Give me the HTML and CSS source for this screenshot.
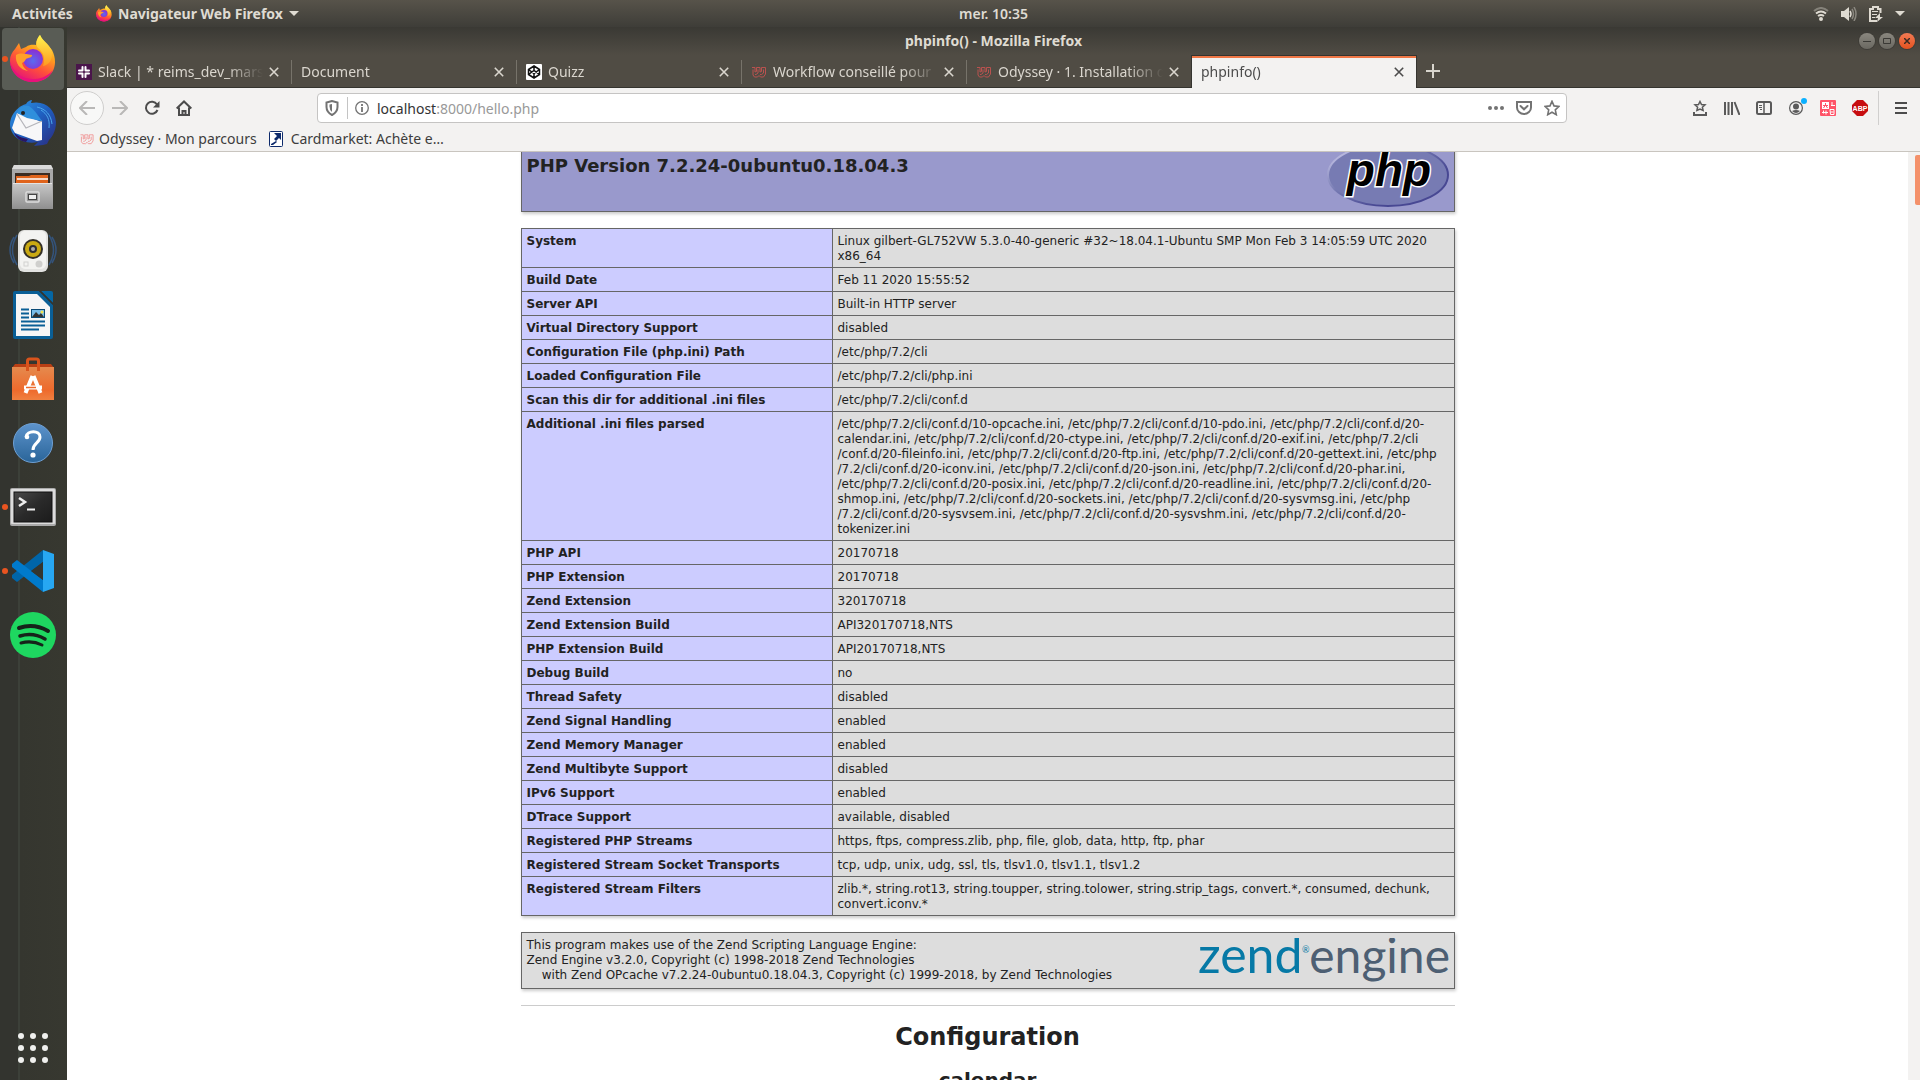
FILE: index.html
```html
<!DOCTYPE html>
<html lang="fr">
<head>
<meta charset="utf-8">
<title>phpinfo()</title>
<link rel="stylesheet" href="styles.css">
</head>
<body>
<svg class="defs" aria-hidden="true">
  <defs>
    <linearGradient id="fox-body" x1="0.8" y1="0" x2="0.3" y2="1"><stop offset="0" stop-color="#fff44f"/><stop offset=".35" stop-color="#ffa21c"/><stop offset=".65" stop-color="#ff4f3b"/><stop offset="1" stop-color="#e3107c"/></linearGradient>
    <radialGradient id="fox-globe" cx=".5" cy=".6" r=".6"><stop offset="0" stop-color="#5a6bf0"/><stop offset="1" stop-color="#8e2bd0"/></radialGradient>
    <linearGradient id="fox-flame" x1="0" y1="0" x2="0" y2="1"><stop offset="0" stop-color="#fff44f"/><stop offset="1" stop-color="#ff9a20"/></linearGradient>
    <linearGradient id="bird" x1="0" y1="0" x2="1" y2="1"><stop offset="0" stop-color="#2f9be8"/><stop offset=".5" stop-color="#1f5fc0"/><stop offset="1" stop-color="#2b2a7c"/></linearGradient>
    <linearGradient id="metal" x1="0" y1="0" x2="0" y2="1"><stop offset="0" stop-color="#c8c8c8"/><stop offset="1" stop-color="#8f8f8f"/></linearGradient>
    <linearGradient id="bag" x1="0" y1="0" x2="0" y2="1"><stop offset="0" stop-color="#e58a4e"/><stop offset=".7" stop-color="#ee6a2c"/><stop offset="1" stop-color="#f08040"/></linearGradient>
    <linearGradient id="help" x1="0" y1="0" x2="0" y2="1"><stop offset="0" stop-color="#5d93cc"/><stop offset="1" stop-color="#2a6599"/></linearGradient>
    <linearGradient id="screen" x1="0" y1="0" x2="1" y2="1"><stop offset="0" stop-color="#4a4a4a"/><stop offset=".5" stop-color="#2a2a2a"/><stop offset="1" stop-color="#1b1b1b"/></linearGradient>
    <symbol id="i-firefox" viewBox="0 0 46 48">
      <path d="M5 14 9 8l2 6 5-2c4-3 8-2 10-2 0-5 2-8 4-10 2 6 8 9 12 15 2 4 3 8 3 12C45 39 35 47 23 47S0 38 0 25c0-4 2-8 5-11z" fill="url(#fox-body)"/>
      <path d="M30 0c-3 4-5 9-2 13 5 4 8 10 5 18 6-1 9-6 9-12 0-9-9-12-12-19z" fill="url(#fox-flame)"/>
      <circle cx="23" cy="24" r="10" fill="url(#fox-globe)"/>
      <path d="M6 20c5-3 9-1 16 0 1 2-4 3-6 4-1 2-2 3-4 4 1 4 3 6 6 8-8-1-13-8-12-16z" fill="#ffa02a"/>
      <path d="M0 27c1 12 11 20 23 20 10 0 17-5 20-12-7 8-14 9-20 9C12 44 4 38 0 27z" fill="#e8117c"/>
    </symbol>
    <symbol id="i-odyssey" viewBox="0 0 15 12"><g fill="none" stroke="currentColor"><path d="M.5 1.500h3V6l1.500-.5V1.500h3.500V6l1.500-.5V1.500H14V8l-2 3H9L7.500 9.500 6 11H3L1.500 9V3.500"/><path d="M3.500 8.500h1l2-1.500V3.500M8.500 8.500h1.500L12 7V3.500"/></g></symbol>
    <symbol id="i-close" viewBox="0 0 10 10"><path d="M.8.800l8.400 8.400M9.200.8.800 9.200" stroke="currentColor" stroke-width="1.600"/></symbol>
  </defs>
</svg>

<header class="topbar">
  <button class="top-item activities">Activités</button>
  <button class="top-item appmenu">
    <svg width="16" height="17"><use href="#i-firefox"/></svg>
    <span>Navigateur Web Firefox</span>
    <svg width="10" height="5"><path d="M0 0h10L5 5z" fill="currentColor"/></svg>
  </button>
  <button class="top-item clock">mer. 10:35</button>
  <div class="status">
    <svg width="16" height="14" viewBox="0 0 16 14" fill="none" stroke="#dfdbd2" stroke-width="2"><path d="M1 4Q8-2 15 4" stroke="#85827a"/><path d="M3 6.500q5-4 10 0"/><path d="M5 9q3-2 6 0"/><circle cx="8" cy="12" r="1" /></svg>
    <svg width="16" height="14" viewBox="0 0 16 14"><path d="M0 4h3l5-4v14l-5-4H0z" fill="#dfdbd2"/><path d="M9 4q2 3 0 6" stroke="#dfdbd2" stroke-width="1.500" fill="none"/><path d="M11 2q3 5 0 10M13 0q4 7 0 14" stroke="#8a877f" stroke-width="1.500" fill="none"/></svg>
    <svg width="14" height="16" viewBox="0 0 14 16"><path d="M8 15H1V3h3V1h5v2h2.500v4" stroke="#dfdbd2" stroke-width="2" fill="none"/><path d="M3 5.500h6M3 8.500h5M3 11.500h3" stroke="#dfdbd2"/><path d="M11 7l-5 5h3l-1 4 6-5h-3z" fill="#dfdbd2"/></svg>
    <svg width="10" height="5"><path d="M0 0h10L5 5z" fill="#dfdbd2"/></svg>
  </div>
</header>

<nav class="dock" aria-label="Applications">
  <button class="app active running" aria-label="Firefox"><svg width="46" height="48"><use href="#i-firefox"/></svg></button>
  <button class="app" aria-label="Thunderbird"><svg width="48" height="48" viewBox="0 0 48 48">
    <path d="M3 17C7 10 11 7 17 5c2-3 4-4 6-4l-1 3c14-3 24 6 25 19 0 8-3 14-7 18l-2 4-4 1-9 1 4-4C14 46 1 38 1 25c0-3 1-6 2-8z" fill="url(#bird)"/>
    <path d="M5 33c3 4 8 6 14 7l-2 3c-6-1-11-5-12-10z" fill="#2a1663"/>
    <path d="M8 14l25 9v18l-5 1-22-8-3-5z" fill="#f7f7f8"/><path d="M8 15l9 14 16-7" fill="none" stroke="#b5b5ba" stroke-width="1.200"/>
    <path d="M8 14C10 8 14 6 20 7c5 3 8 8 13 15L18 19z" fill="#2f8fdc"/><circle cx="14" cy="14" r="2" fill="#222"/>
    <path d="M32 11c6 4 9 9 8 18M28 8c9 2 14 8 15 17" stroke="#4ba7ec" fill="none"/></svg></button>
  <button class="app" aria-label="Fichiers"><svg width="44" height="46" viewBox="0 0 44 46">
    <path d="M3 1h37l2 4v39H1V5z" fill="#a9a9a9"/><path d="M3 1h37l2 4H1z" fill="#dadada"/><path d="M4 9h35v11H4z" fill="#3b2c22"/>
    <path d="M5 12h13l2-1h17v8H5z" fill="#e0641c"/><path d="M6 15h31" stroke="#fff" stroke-width="1.500"/>
    <path d="M2 19h39l1 26H1z" fill="url(#metal)"/><path d="M2 19.500h39" stroke="#e4e4e4"/>
    <rect x="15" y="28" width="13" height="10" rx="1" fill="#999" stroke="#ddd" stroke-width="1.500"/><rect x="17.500" y="30.500" width="8" height="5" fill="#eee" stroke="#444"/></svg></button>
  <button class="app" aria-label="Rhythmbox"><svg width="48" height="44" viewBox="0 0 48 44">
    <path d="M5 8q-8 13 0 26M8 6Q-1 21 8 36M43 8q8 13 0 26M40 6q9 15 0 30" fill="none" stroke="#34537a" stroke-width="1.500"/>
    <rect x="9" y="1" width="30" height="42" rx="6" fill="#e2e2e0"/><rect x="11" y="2" width="26" height="38" rx="5" fill="#f3f3f1"/>
    <circle cx="24" cy="20" r="10" fill="#332f27"/><circle cx="24" cy="20" r="8" fill="#c9a913"/><circle cx="24" cy="20" r="4" fill="#2d2d33"/><circle cx="24" cy="20" r="2" fill="#aaa"/>
    <circle cx="30" cy="35" r="3.500" fill="#cfcfcd"/><rect x="15" y="33" width="4" height="4" fill="none" stroke="#d2d2d0"/></svg></button>
  <button class="app" aria-label="LibreOffice Writer"><svg width="40" height="48" viewBox="0 0 40 48">
    <path d="M2 0h24l14 14v32q0 2-2 2H2q-2 0-2-2V2Q0 0 2 0z" fill="#0a5f96"/><path d="M28 0h10q2 0 2 2v10z" fill="#0567a5"/>
    <path d="M26 0h2l12 12v2z" fill="#33332e"/><path d="M3 3h21l13 13v29H3z" fill="#f6f6f6"/>
    <path d="M8 18.500h8M8 22.500h8M8 26.500h8M8 30.500h24M8 34.500h24M8 38.500h18" stroke="#0a5f96" stroke-width="2"/>
    <rect x="18.500" y="18.500" width="13" height="8" fill="#79bce8" stroke="#0a4a76"/><path d="M19 26l4-5 3 3 2-2 3 4z" fill="#333"/><circle cx="29" cy="21" r="1.500" fill="#f4e24a"/></svg></button>
  <button class="app" aria-label="Logiciels"><svg width="42" height="44" viewBox="0 0 42 44">
    <path d="M3 7h36l3 4v32H0V11z" fill="#b93f14"/><path d="M0 10h42v33H0z" fill="url(#bag)"/>
    <path d="M15.500 14V4q0-2 2-2h7q2 0 2 2v10" fill="none" stroke="#d9541c" stroke-width="3"/>
    <path d="M20.500 19l-7 17M21.500 19l7 17" stroke="#fff" stroke-width="4"/><path d="M12 30.500h18" stroke="#fff" stroke-width="4" /><path d="M14 30.500h10" stroke="#ee6a2c" stroke-width="1.500"/></svg></button>
  <button class="app" aria-label="Aide"><svg width="40" height="40" viewBox="0 0 40 40"><circle cx="20" cy="20" r="19.500" fill="url(#help)" stroke="#6fa0d4"/><path d="M13 14c1-7 14-7 14 0 0 6-7 6-7 13" fill="none" stroke="#fff" stroke-width="3"/><circle cx="14" cy="14" r="2.300" fill="#fff"/><circle cx="20" cy="32" r="2.600" fill="#fff"/></svg></button>
  <button class="app running" aria-label="Terminal"><svg width="46" height="38" viewBox="0 0 46 38"><rect width="46" height="38" rx="2" fill="#aaa"/><rect x="1" y="1" width="44" height="35" rx="1" fill="#dcdcdc"/><rect x="4" y="4" width="38" height="30" fill="url(#screen)" stroke="#111"/><path d="M9 10l6 4-6 4" fill="none" stroke="#eee" stroke-width="2.500"/><path d="M17 21.500h8" stroke="#eee" stroke-width="2"/></svg></button>
  <button class="app running" aria-label="Visual Studio Code"><svg width="42" height="42" viewBox="0 0 42 42"><path d="M31 0v12L5 32l-5-4v-3z" fill="#0065a9"/><path d="M31 42V30L5 10l-5 4v3z" fill="#007acc"/><path d="M31 0l11 4v34l-11 4z" fill="#27a7f2"/><path d="M31 12v18L19 21z" fill="#34352f"/></svg></button>
  <button class="app" aria-label="Spotify"><svg width="46" height="46" viewBox="0 0 46 46"><circle cx="23" cy="23" r="23" fill="#1ed760"/><g fill="none" stroke="#16231a" stroke-linecap="round"><path d="M9 16q15-5 29 3" stroke-width="4"/><path d="M10 24q13-4 25 3" stroke-width="3.500"/><path d="M11 31q11-3 21 2" stroke-width="3"/></g></svg></button>
  <button class="app show-apps" aria-label="Afficher les applications"><svg width="30" height="30" viewBox="0 0 30 30" fill="#f0f0ee"><circle cx="3" cy="3" r="3"/><circle cx="15" cy="3" r="3"/><circle cx="27" cy="3" r="3"/><circle cx="3" cy="15" r="3"/><circle cx="15" cy="15" r="3"/><circle cx="27" cy="15" r="3"/><circle cx="3" cy="27" r="3"/><circle cx="15" cy="27" r="3"/><circle cx="27" cy="27" r="3"/></svg></button>
</nav>

<main class="window">
  <div class="titlebar">
    <span></span>
    <span class="title">phpinfo() - Mozilla Firefox</span>
    <div class="controls">
      <button class="control" aria-label="Réduire"><svg width="8" height="8"><path d="M0 4.500h8" stroke="#3a3935"/></svg></button>
      <button class="control" aria-label="Agrandir"><svg width="8" height="8"><path d="M.5 1.500h7v5h-7z" stroke="#3a3935" fill="none"/></svg></button>
      <button class="control quit" aria-label="Fermer"><svg width="6" height="6"><path d="M0 0l6 6M6 0 0 6" stroke="#3a2a22" stroke-width="1.500"/></svg></button>
    </div>
  </div>

  <div class="tabs">
    <div class="tab">
      <svg width="16" height="16"><rect width="16" height="16" fill="#4a154b"/><g stroke="#fff" stroke-width="2" stroke-linecap="round"><path d="M6.500 3v3.500M3 6.500h3.500M9.500 3v3.500M9.500 6.500H13M3 9.500h3.500M6.500 9.500V13M9.500 9.500H13M9.500 9.500V13"/></g></svg>
      <a class="tab-label" href="#">Slack | * reims_dev_mars2</a>
      <button class="tab-close" aria-label="Fermer l’onglet"><svg width="10" height="10"><use href="#i-close"/></svg></button>
    </div>
    <div class="tab">
      <a class="tab-label" href="#">Document</a>
      <button class="tab-close" aria-label="Fermer l’onglet"><svg width="10" height="10"><use href="#i-close"/></svg></button>
    </div>
    <div class="tab">
      <svg width="16" height="16"><rect width="16" height="16" rx="1" fill="#fff"/><path d="M8 2l5.500 3.500v5L8 14l-5.500-3.500v-5zM8 2v4M8 10v4M2.500 5.500 8 9.500l5.500-4M2.500 10.500 8 6.500l5.500 4" fill="none" stroke="#111" stroke-width="1.500"/></svg>
      <a class="tab-label" href="#">Quizz</a>
      <button class="tab-close" aria-label="Fermer l’onglet"><svg width="10" height="10"><use href="#i-close"/></svg></button>
    </div>
    <div class="tab">
      <svg class="ody-dark" width="16" height="12"><use href="#i-odyssey"/></svg>
      <a class="tab-label" href="#">Workflow conseillé pour</a>
      <button class="tab-close" aria-label="Fermer l’onglet"><svg width="10" height="10"><use href="#i-close"/></svg></button>
    </div>
    <div class="tab">
      <svg class="ody-dark" width="16" height="12"><use href="#i-odyssey"/></svg>
      <a class="tab-label" href="#">Odyssey · 1. Installation d</a>
      <button class="tab-close" aria-label="Fermer l’onglet"><svg width="10" height="10"><use href="#i-close"/></svg></button>
    </div>
    <div class="tab current">
      <a class="tab-label" href="#">phpinfo()</a>
      <button class="tab-close" aria-label="Fermer l’onglet"><svg width="10" height="10"><use href="#i-close"/></svg></button>
    </div>
    <button class="newtab" aria-label="Nouvel onglet"><svg width="14" height="14"><path d="M7 0v14M0 7h14" stroke="#d8d5cd" stroke-width="2"/></svg></button>
  </div>

  <div class="toolbar">
    <div class="nav-left">
      <button class="tool back" aria-label="Précédent"><svg width="16" height="14" fill="none" stroke="#b9b8b7" stroke-width="2"><path d="M16 7H1M8 0 1 7l7 7"/></svg></button>
      <button class="tool" aria-label="Suivant"><svg width="16" height="14" fill="none" stroke="#b9b8b7" stroke-width="2"><path d="M0 7h15M8 0l7 7-7 7"/></svg></button>
      <button class="tool" aria-label="Actualiser"><svg width="16" height="16"><path d="M13 4.500A6 6 0 1 0 13.500 10" fill="none" stroke="#4c4c4c" stroke-width="2"/><path d="M15.500 1v6.500H9z" fill="#4c4c4c"/></svg></button>
      <button class="tool" aria-label="Accueil"><svg width="16" height="16" fill="none" stroke="#4c4c4c" stroke-width="2"><path d="M.7 8.500 8 1.500l7.300 7M3 7.500V15h10V7.500"/><path d="M6.500 15v-4h3v4" /></svg></button>
    </div>
    <div class="urlbar">
      <svg width="14" height="16" fill="none" stroke="#737373" stroke-width="2"><path d="M7 1 1.500 2.500V7q0 5 5.500 8 5.500-3 5.500-8V2.500z"/><path d="M7 4v8Q4.500 10 4.500 6.500v-2z" fill="#737373" stroke="none"/></svg>
      <span class="url-sep"></span>
      <svg width="14" height="14"><circle cx="7" cy="7" r="6.300" fill="none" stroke="#737373" stroke-width="1.300"/><path d="M7 6v5M7 3v2" stroke="#737373" stroke-width="1.800"/></svg>
      <label class="url-text"><span class="url-show"><b>localhost</b>:8000/hello.php</span><input class="url-input" type="text" aria-label="Adresse"></label>
      <svg width="16" height="4" fill="#737373"><circle cx="2" cy="2" r="2"/><circle cx="8" cy="2" r="2"/><circle cx="14" cy="2" r="2"/></svg>
      <svg width="16" height="14" fill="none" stroke="#737373" stroke-width="2"><path d="M1 1h14v5.500a7 6.500 0 0 1-14 0z"/><path d="M4.500 5 8 8.300 11.500 5" stroke-linecap="round"/></svg>
      <svg width="16" height="16" fill="none" stroke="#737373" stroke-width="1.600"><path d="M8 1.300l2 4.600 5 .5-3.700 3.400 1 4.900L8 12.200l-4.300 2.500 1-4.900L1 6.400l5-.5z"/></svg>
    </div>
    <div class="nav-right">
      <button class="tool" aria-label="Marque-pages"><svg width="14" height="16" fill="none" stroke="#5a5a5a"><path d="M7 1.500l1.500 3 3.500.4-2.600 2.300.7 3.300L7 9l-3.100 1.500.7-3.300L2 4.900l3.500-.4z" stroke-width="1.500"/><path d="M1 12v3h12v-3" stroke-width="2"/></svg></button>
      <button class="tool" aria-label="Bibliothèque"><svg width="16" height="14" stroke="#5a5a5a" stroke-width="2"><path d="M1 1v13M4.500 1v13M8 1v13M10.500 1l5 13"/></svg></button>
      <button class="tool" aria-label="Panneau latéral"><svg width="16" height="14" fill="none" stroke="#5a5a5a"><rect x="1" y="1" width="14" height="12" rx="1.500" stroke-width="2"/><path d="M8 1v12" stroke-width="1.500"/><path d="M3 4.500h3M3 6.500h3M4 8.500h2"/></svg></button>
      <button class="tool account" aria-label="Compte"><svg width="14" height="14"><circle cx="7" cy="7" r="6.400" fill="none" stroke="#5a5a5a" stroke-width="1.200"/><circle cx="7" cy="5.500" r="3" fill="#5a5a5a"/><path d="M3 10q4-2 8 0-4 4-8 0z" fill="#5a5a5a"/></svg><span class="dot"></span></button>
      <button class="tool" aria-label="Traduction"><svg width="16" height="16"><rect width="16" height="16" rx="1" fill="#ff5468"/><path d="M2 2h7v7H2z" fill="#fff"/><path d="M5.500 3v2M3 5.500h5M5.500 5 3.500 8M5.500 5l2 3" stroke="#ff5468" fill="none"/><path d="M11 5.500h4M12 2v3M10 9.500h4v5h-3.500zM2 12.500h6M3.500 10.500v3M6 10.500v4M10.500 12h3" fill="none" stroke="#fff"/></svg></button>
      <button class="tool" aria-label="Adblock Plus"><svg width="16" height="16"><path d="M5 0h6l5 5v6l-5 5H5l-5-5V5z" fill="#c70d10"/><text class="abp" x="8" y="11" text-anchor="middle">ABP</text></svg></button>
      <span class="tool-sep"></span>
      <button class="tool menu" aria-label="Menu"><svg width="12" height="12" stroke="#4c4c4c" stroke-width="2"><path d="M0 1h12M0 6h12M0 11h12"/></svg></button>
    </div>
  </div>

  <div class="bookmarks">
    <a href="#"><svg class="ody-light" width="14" height="12"><use href="#i-odyssey"/></svg>Odyssey · Mon parcours</a>
    <a href="#" class="cm"><svg width="14" height="16"><rect x=".5" y=".5" width="13" height="15" rx="1" fill="#fff" stroke="#0d2a6b"/><path d="M5 2h7v7l-2-2-3 3-2-2 3-3z M2 13l5-3 1 1-4 3H2z" fill="#0d2a6b"/></svg>Cardmarket: Achète e…</a>
  </div>

  <div class="viewport">
    <article class="doc">
      <section class="box head">
        <h1>PHP Version 7.2.24-0ubuntu0.18.04.3</h1>
        <svg class="php-logo" width="122" height="66" viewBox="0 0 122 66" role="img" aria-label="PHP">
          <defs><linearGradient id="rim" x1="0" y1="0" x2="1" y2="1"><stop offset=".15" stop-color="#b5b5dc"/><stop offset=".4" stop-color="#777bb3"/><stop offset=".7" stop-color="#484893"/></linearGradient></defs>
          <ellipse cx="61" cy="34" rx="60" ry="31" fill="#777bb3" stroke="url(#rim)" stroke-width="2"/>
          <text class="php-word" x="62" y="45" text-anchor="middle">php</text>
        </svg>
      </section>

      <table class="info">
        <tr><th scope="row">System</th><td>Linux gilbert-GL752VW 5.3.0-40-generic #32~18.04.1-Ubuntu SMP Mon Feb 3 14:05:59 UTC 2020<br>x86_64</td></tr>
        <tr><th scope="row">Build Date</th><td>Feb 11 2020 15:55:52</td></tr>
        <tr><th scope="row">Server API</th><td>Built-in HTTP server</td></tr>
        <tr><th scope="row">Virtual Directory Support</th><td>disabled</td></tr>
        <tr><th scope="row">Configuration File (php.ini) Path</th><td>/etc/php/7.2/cli</td></tr>
        <tr><th scope="row">Loaded Configuration File</th><td>/etc/php/7.2/cli/php.ini</td></tr>
        <tr><th scope="row">Scan this dir for additional .ini files</th><td>/etc/php/7.2/cli/conf.d</td></tr>
        <tr><th scope="row">Additional .ini files parsed</th><td>/etc/php/7.2/cli/conf.d/10-opcache.ini, /etc/php/7.2/cli/conf.d/10-pdo.ini, /etc/php/7.2/cli/conf.d/20-<br>calendar.ini, /etc/php/7.2/cli/conf.d/20-ctype.ini, /etc/php/7.2/cli/conf.d/20-exif.ini, /etc/php/7.2/cli<br>/conf.d/20-fileinfo.ini, /etc/php/7.2/cli/conf.d/20-ftp.ini, /etc/php/7.2/cli/conf.d/20-gettext.ini, /etc/php<br>/7.2/cli/conf.d/20-iconv.ini, /etc/php/7.2/cli/conf.d/20-json.ini, /etc/php/7.2/cli/conf.d/20-phar.ini,<br>/etc/php/7.2/cli/conf.d/20-posix.ini, /etc/php/7.2/cli/conf.d/20-readline.ini, /etc/php/7.2/cli/conf.d/20-<br>shmop.ini, /etc/php/7.2/cli/conf.d/20-sockets.ini, /etc/php/7.2/cli/conf.d/20-sysvmsg.ini, /etc/php<br>/7.2/cli/conf.d/20-sysvsem.ini, /etc/php/7.2/cli/conf.d/20-sysvshm.ini, /etc/php/7.2/cli/conf.d/20-<br>tokenizer.ini</td></tr>
        <tr><th scope="row">PHP API</th><td>20170718</td></tr>
        <tr><th scope="row">PHP Extension</th><td>20170718</td></tr>
        <tr><th scope="row">Zend Extension</th><td>320170718</td></tr>
        <tr><th scope="row">Zend Extension Build</th><td>API320170718,NTS</td></tr>
        <tr><th scope="row">PHP Extension Build</th><td>API20170718,NTS</td></tr>
        <tr><th scope="row">Debug Build</th><td>no</td></tr>
        <tr><th scope="row">Thread Safety</th><td>disabled</td></tr>
        <tr><th scope="row">Zend Signal Handling</th><td>enabled</td></tr>
        <tr><th scope="row">Zend Memory Manager</th><td>enabled</td></tr>
        <tr><th scope="row">Zend Multibyte Support</th><td>disabled</td></tr>
        <tr><th scope="row">IPv6 Support</th><td>enabled</td></tr>
        <tr><th scope="row">DTrace Support</th><td>available, disabled</td></tr>
        <tr><th scope="row">Registered PHP Streams</th><td>https, ftps, compress.zlib, php, file, glob, data, http, ftp, phar</td></tr>
        <tr><th scope="row">Registered Stream Socket Transports</th><td>tcp, udp, unix, udg, ssl, tls, tlsv1.0, tlsv1.1, tlsv1.2</td></tr>
        <tr><th scope="row">Registered Stream Filters</th><td>zlib.*, string.rot13, string.toupper, string.tolower, string.strip_tags, convert.*, consumed, dechunk,<br>convert.iconv.*</td></tr>
      </table>

      <section class="box zend">
        <p>This program makes use of the Zend Scripting Language Engine:<br>Zend Engine v3.2.0, Copyright (c) 1998-2018 Zend Technologies<br>&nbsp;&nbsp;&nbsp;&nbsp;with Zend OPcache v7.2.24-0ubuntu0.18.04.3, Copyright (c) 1999-2018, by Zend Technologies</p>
        <svg width="252" height="48" viewBox="0 0 252 48" role="img" aria-label="Zend Engine">
          <text class="zend-word" x="0" y="35">zend</text>
          <text class="zend-reg" x="104" y="15">®</text>
          <text class="engine-word" x="252" y="35" text-anchor="end">engine</text>
        </svg>
      </section>
      <hr>
      <h2 class="chapter">Configuration</h2>
      <h3 class="module"><a href="#">calendar</a></h3>
    </article>
    <div class="scrollbar"><div class="thumb"></div></div>
  </div>
</main>
</body>
</html>
```
FILE: styles.css
```css
* { box-sizing: border-box; }

body {
  margin: 0;
  height: 100vh;
  overflow: hidden;
  display: grid;
  grid-template: 27px minmax(0, 1fr) / 67px minmax(0, 1fr);
  font: 14px/20px "Noto Sans", sans-serif;
  background: #35352f;
}

button {
  display: flex;
  align-items: center;
  justify-content: center;
  padding: 0;
  border: 0;
  background: none;
  color: inherit;
  font: inherit;
}

a { color: inherit; text-decoration: none; }
svg { display: block; flex: none; }
.defs { position: absolute; width: 0; height: 0; }

/* Top panel */
.topbar {
  grid-column: 1 / -1;
  display: grid;
  grid-template-columns: 67px 1fr auto 1fr;
  align-items: center;
  background: linear-gradient(#57534a, #3e3d38);
  color: #dfdbd2;
  font-weight: 700;
  white-space: nowrap;
}
.activities { justify-content: flex-start; padding-left: 12px; }
.appmenu { justify-content: flex-start; gap: 6px; padding-left: 29px; }
.clock { font-weight: 600; }
.status {
  display: flex;
  align-items: center;
  justify-content: flex-end;
  gap: 12px;
  padding-right: 15px;
}

/* Dock */
.dock {
  display: flex;
  flex-direction: column;
  gap: 2px;
  padding: 1px 3px 0 2px;
  background: linear-gradient(90deg, #33342f 0 18px, #3c4039 18px 20px, #35362f 20px, #373830);
}
.app {
  position: relative;
  width: 62px;
  height: 62px;
  border-radius: 4px;
}
.app.active { background: #595c55; }
.app.running::before {
  content: "";
  position: absolute;
  left: 0;
  top: 28px;
  width: 6px;
  height: 6px;
  border-radius: 50%;
  background: #e95420;
}
.show-apps { margin-top: auto; margin-bottom: 1px; }

/* Window frame */
.window { display: flex; flex-direction: column; min-height: 0; }
.titlebar {
  display: grid;
  grid-template-columns: 1fr auto 1fr;
  align-items: center;
  height: 28px;
  background: linear-gradient(#3a3934, #504c44);
  color: #dfdbd2;
}
.title { font-weight: 700; }
.controls { display: flex; justify-content: flex-end; gap: 4px; padding-right: 5px; }
.control {
  width: 16px;
  height: 16px;
  border-radius: 50%;
  background: linear-gradient(#8a877f, #6a6861);
  box-shadow: 0 0 0 1px #3e3c37;
}
.control.quit { background: linear-gradient(#f27a54, #e4521f); }

/* Tabs */
.tabs {
  display: flex;
  height: 33px;
  background: #504c44;
  border-bottom: 1px solid #35342f;
  color: #dad6ce;
}
.tab {
  flex: 0 1 225px;
  min-width: 0;
  display: flex;
  align-items: center;
  gap: 6px;
  padding: 1px 13px 0 9px;
  background: linear-gradient(#77736a, #77736a) right 5px / 1px 24px no-repeat;
}
.tab:nth-child(5) { background: none; }
.tab-label {
  flex: 1;
  overflow: hidden;
  white-space: nowrap;
  mask-image: linear-gradient(270deg, transparent, #000 36px);
}
.tab-close { width: 10px; height: 20px; }
.tab.current {
  flex-basis: 226px;
  margin: 0 0 -1px -1px;
  padding: 0 12px 0 9px;
  border: 1px solid #35342f;
  border-bottom: 0;
  background: linear-gradient(#f07746 0 2px, #f3f2f1 2px);
  color: #4c4c4c;
}
.newtab { width: 32px; }
.ody-dark { color: #b9524f; }
.ody-light { color: #f09a9a; }

/* Navigation toolbar */
.toolbar {
  display: flex;
  align-items: center;
  height: 40px;
  background: #f3f2f1;
}
.nav-left { display: flex; align-items: center; width: 250px; padding-left: 3px; }
.tool { position: relative; width: 32px; height: 34px; }
.tool.back {
  width: 34px;
  border: 1px solid #cfcecd;
  border-radius: 50%;
  background: #f8f8f7;
}
.urlbar {
  flex: 1;
  display: flex;
  align-items: center;
  gap: 12px;
  height: 30px;
  padding: 0 6px 0 7px;
  border: 1px solid #c5c4c3;
  border-radius: 4px;
  background: #fff;
}
.url-sep { width: 1px; height: 22px; margin: 0 -5px 0 -4px; background: #c4c4c4; }
.url-text { display: flex; flex: 1; margin-left: -4px; padding-top: 1px; color: #999; }
.url-text b { font-weight: 400; color: #333; }
.url-input { flex: 1; border: 0; padding: 0; outline: 0; background: none; font: inherit; }
.nav-right { display: flex; align-items: center; width: 353px; justify-content: flex-end; padding-right: 3px; }
.dot {
  position: absolute;
  right: 5px;
  top: 7px;
  width: 6px;
  height: 6px;
  border-radius: 50%;
  background: #0ab0ff;
}
.abp { font: bold 7px "Liberation Sans", sans-serif; fill: #fff; }
.tool-sep { width: 1px; height: 34px; margin: 0 6px 0 2px; background: #d0cfce; }

/* Bookmarks */
.bookmarks {
  display: flex;
  align-items: center;
  gap: 12px;
  height: 24px;
  padding: 0 13px 2px;
  background: #f3f2f1;
  border-bottom: 1px solid #c9c5bf;
  color: #3d3d3d;
}
.bookmarks a { display: flex; align-items: center; gap: 5px; }
.bookmarks .cm { gap: 8px; }

/* Page */
.viewport {
  flex: 1;
  min-height: 0;
  display: flex;
  overflow: hidden;
  background: #fff;
}
.doc {
  flex: 0 1 934px;
  min-width: 0;
  margin: -20px auto 0;
  color: #222;
  font: 12px/15px "DejaVu Sans", sans-serif;
}
.box {
  display: flex;
  justify-content: space-between;
  border: 1px solid #666;
  box-shadow: 1px 2px 3px #ccc;
}
.head { height: 80px; padding: 8px 5px; background: #9999cc; }
.head h1 { margin: 14px 0 0; font-size: 18px; line-height: 22px; }
.php-word {
  font: italic bold 46px "Liberation Sans", sans-serif;
  fill: #000;
  stroke: #fff;
  stroke-width: 3px;
  paint-order: stroke;
}
.info {
  width: 100%;
  margin: 16px 0;
  border-collapse: collapse;
  table-layout: fixed;
  box-shadow: 1px 2px 3px #ccc;
}
.info th, .info td {
  padding: 5px 5px 3px;
  border: 1px solid #666;
  text-align: left;
  vertical-align: top;
}
.info th { width: 311px; background: #ccccff; }
.info td { background: #dddddd; white-space: nowrap; }
.zend { height: 57px; padding: 5px 4px 3px 5px; background: #dddddd; }
.zend p { margin: 0; white-space: nowrap; }
.zend-word { font: 50px Lato, sans-serif; fill: #0679a6; }
.zend-reg { font: 9px Lato, sans-serif; fill: #0679a6; }
.engine-word { font: 48px Lato, sans-serif; fill: #4d5f73; }
hr { margin: 16px 0 0; border: 0; border-top: 1px solid #ccc; }
.chapter { margin: 17px 0; font-size: 24px; line-height: 28px; text-align: center; }
.module { margin: 0; font-size: 20px; line-height: 24px; text-align: center; }
.scrollbar { display: flex; justify-content: flex-end; width: 12px; background: #f3f2f1; }
.thumb { width: 5px; height: 50px; margin-top: 3px; border-radius: 2px 0 0 2px; background: #f4916a; }
```
